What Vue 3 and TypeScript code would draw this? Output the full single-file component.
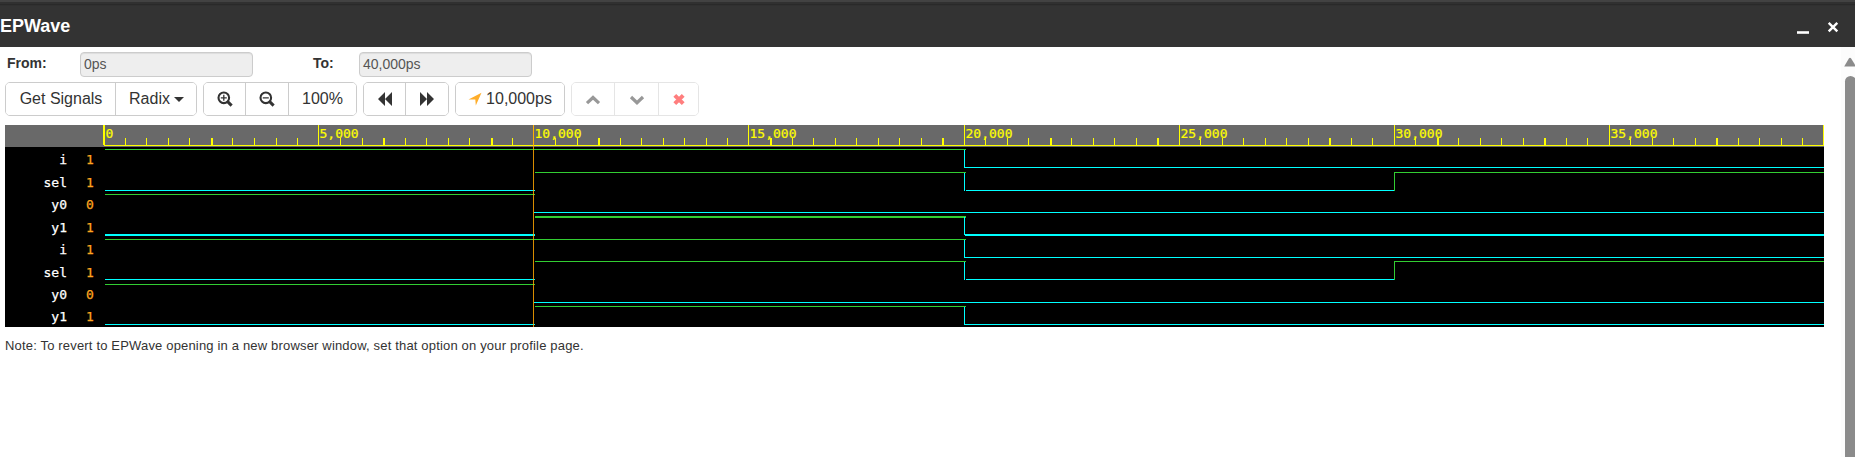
<script setup lang="ts">
const majors = [0, 5, 10, 15, 20, 25, 30, 35].map((n, i) => ({
  x: [104, 318, 533, 748, 964, 1179, 1394, 1609][i] - 5,
  label: n === 0 ? '0' : n + ',000',
}))
const wide = [5, 13, 18, 23, 31, 39, 44, 49, 57, 62, 67, 75]
const minors: { x: number; w: number }[] = []
for (let k = 1; k < 80; k++) {
  if (k % 10 === 0) continue
  minors.push({ x: Math.floor(98.98 + 21.503 * k), w: wide.includes(k) ? 2 : 1 })
}
const T1 = 529
const T2 = 959
const T3 = 1389
const END = 1819
interface Seg { x: number; w: number; y: number; h: number; hi: boolean }
const rows = [
  { name: 'i', value: '1', hi: 149, lo: 167, t: 1 },
  { name: 'sel', value: '1', hi: 172, lo: 190, t: 1 },
  { name: 'y0', value: '0', hi: 194, lo: 212, t: 1 },
  { name: 'y1', value: '1', hi: 216, lo: 234, t: 2 },
  { name: 'i', value: '1', hi: 239, lo: 257, t: 1 },
  { name: 'sel', value: '1', hi: 261, lo: 279, t: 1 },
  { name: 'y0', value: '0', hi: 284, lo: 302, t: 1 },
  { name: 'y1', value: '1', hi: 306, lo: 324, t: 1 },
]
const baselines = [39, 62, 84, 107, 129, 152, 174, 196]
const levels: Record<string, number[][]> = {
  i: [[100, T2 + 2, 1], [T2, END, 0]],
  sel: [[100, T1 + 1, 0], [T1 + 1, T2 + 2, 1], [T2 + 2, T3 + 1, 0], [T3, END, 1]],
  y0: [[100, T1 + 1, 1], [T1, END, 0]],
  y1: [[100, T1 + 1, 0], [T1 + 1, T2 + 2, 1], [T2 + 1, END, 0]],
}
const segs: Seg[] = []
for (const r of rows) {
  for (const [a, b, v] of levels[r.name]) {
    segs.push({ x: a, w: b - a, y: (v ? r.hi : r.lo) - 125, h: r.t, hi: v === 1 })
  }
  if (r.name !== 'y0') segs.push({ x: T2, w: 1, y: r.hi - 124, h: 18, hi: false })
  if (r.name === 'sel') segs.push({ x: T3, w: 1, y: r.hi - 125, h: 19, hi: true })
}
</script>

<template>
  <div class="window">
    <header class="titlebar">
      <span class="title">EPWave</span>
      <svg class="controls" width="50" height="30" viewBox="0 0 50 30">
        <path d="M4 19.5h12" stroke="#fff" stroke-width="2.6" />
        <path d="M35.7 9.8l8.6 8.6M44.3 9.8l-8.6 8.6" stroke="#fff" stroke-width="2.4" />
      </svg>
    </header>
    <div class="body">
      <main class="content">
        <div class="range">
          <label class="from">From:</label><div class="field">0ps</div>
          <label class="to">To:</label><div class="field">40,000ps</div>
        </div>
        <div class="toolbar">
          <div class="group">
            <button class="b1">Get Signals</button>
            <button class="b2">Radix<i class="caret"></i></button>
          </div>
          <div class="group">
            <button class="b3"><svg width="16" height="16" viewBox="0 0 16 16"><circle cx="6.8" cy="6.8" r="5.3" fill="none" stroke="#333" stroke-width="2.1" /><path d="M10.6 10.6l4 4" stroke="#333" stroke-width="3" /><path d="M3.8 6.8h6M6.8 3.8v6" stroke="#333" stroke-width="1.3" /></svg></button>
            <button class="b4"><svg width="16" height="16" viewBox="0 0 16 16"><circle cx="6.8" cy="6.8" r="5.3" fill="none" stroke="#333" stroke-width="2.1" /><path d="M10.6 10.6l4 4" stroke="#333" stroke-width="3" /><path d="M3.8 6.8h6" stroke="#333" stroke-width="1.3" /></svg></button>
            <button class="b5">100%</button>
          </div>
          <div class="group">
            <button class="b6"><svg width="16" height="16" viewBox="0 0 16 16"><path d="M8 1v14L1 8zM15 1v14L8 8z" fill="#333" /></svg></button>
            <button class="b7"><svg width="16" height="16" viewBox="0 0 16 16"><path d="M1 1v14l7-7zM8 1v14l7-7z" fill="#333" /></svg></button>
          </div>
          <div class="group">
            <button class="b8"><svg width="14" height="14" viewBox="0 0 14 14"><path d="M13.5 .8L0.5 7.6H7.3L7.8 13.6z" fill="#ffae2b" /></svg>10,000ps</button>
          </div>
          <div class="group faded">
            <button class="b9"><svg width="16" height="16" viewBox="0 0 16 16"><path d="M2 12.2l6-5.7 6 5.7" fill="none" stroke="#333" stroke-width="3.2" /></svg></button>
            <button class="b10"><svg width="16" height="16" viewBox="0 0 16 16"><path d="M2 6l6 5.7L14 6" fill="none" stroke="#333" stroke-width="3.2" /></svg></button>
            <button class="b11"><svg width="14" height="14" viewBox="0 0 14 14"><path d="M2.8 3.3l8.4 8.4M11.2 3.3l-8.4 8.4" stroke="#f00" stroke-width="4" /></svg></button>
          </div>
        </div>
        <svg class="wave" width="1819" height="202" viewBox="0 0 1819 202">
          <rect width="1819" height="202" fill="#000" />
          <rect width="1819" height="22" fill="#696969" />
          <g fill="#ff0">
            <rect x="99" y="20" width="1720" height="1" />
            <rect x="98" y="0" width="1" height="20" />
            <rect x="1818" y="0" width="1" height="20" />
            <rect v-for="m in minors" :key="m.x" :x="m.x" y="13" :width="m.w" height="7" />
            <g v-for="m in majors" :key="m.label">
              <rect :x="m.x" y="0" width="1" height="20" />
              <text class="tick" :x="m.x + 1.5" y="13">{{ m.label }}</text>
            </g>
          </g>
          <rect v-for="(s, n) in segs" :key="n" :x="s.x" :y="s.y" :width="s.w" :height="s.h" :fill="s.hi ? '#32cd32' : '#0ff'" />
          <rect x="528" y="0" width="1" height="202" fill="#ffa500" opacity=".85" />
          <g v-for="(r, n) in rows" :key="n">
            <text class="name" x="62" :y="baselines[n]" text-anchor="end">{{ r.name }}</text>
            <text class="value" x="81" :y="baselines[n]">{{ r.value }}</text>
          </g>
        </svg>
        <p class="note">Note: To revert to EPWave opening in a new browser window, set that option on your profile page.</p>
      </main>
      <aside class="scroll">
        <svg width="14" height="10" viewBox="0 0 14 10"><path d="M1.2 9.5L6 1.2Q7 .2 8 1.2L13 9.5z" fill="#8b8b8b" /></svg>
        <div class="thumb"></div>
      </aside>
    </div>
  </div>
</template>

<style>
body { margin: 0; overflow: hidden; background: #fff; }
</style>
<style scoped>
.window { width: 1855px; height: 457px; overflow: hidden; font-family: "Liberation Sans", Arial, sans-serif; color: #333; background: #fff; }
.titlebar { height: 47px; box-sizing: border-box; padding-right: 18px; background: linear-gradient(#424242 0 2px, #303030 2px 4px, #292929 4px 5px, #303030 5px 6px, #333 6px); display: flex; align-items: flex-start; justify-content: space-between; }
.title { color: #fff; font-weight: bold; font-size: 18px; line-height: 20px; margin-top: 16px; }
.controls { margin-top: 13px; margin-right: -6px; }
.body { display: flex; height: 410px; }
.content { width: 1841px; padding-left: 5px; box-sizing: border-box; }
.range { display: flex; height: 35px; padding-top: 5px; box-sizing: border-box; font-size: 14px; }
.range label { font-weight: bold; line-height: 23px; box-sizing: border-box; padding-left: 2px; }
.from { width: 75px; }
.to { width: 106px; }
.range .to { padding-left: 60px; }
.field { width: 173px; height: 25px; box-sizing: border-box; border: 1px solid #ccc; border-radius: 4px; background: #eee; color: #555; line-height: 23px; padding-left: 3px; box-shadow: inset 0 1px 1px rgba(0, 0, 0, .075); }
.toolbar { display: flex; gap: 6px; height: 43px; }
.group { display: flex; height: 34px; box-sizing: border-box; border: 1px solid #ccc; border-radius: 5px; overflow: hidden; }
.faded { opacity: .5; }
button { border: 0; background: #fff; padding: 0; font: 16px "Liberation Sans", Arial, sans-serif; color: #333; display: flex; align-items: center; justify-content: center; box-sizing: border-box; }
button + button { border-left: 1px solid #ccc; }
.b1 { width: 109px; padding-left: 1px; }
.b2 { width: 81px; padding-left: 1px; }
.caret { border: 5px solid transparent; border-top-color: #333; border-bottom: 0; margin-left: 4px; }
.b3 { width: 41px; }
.b4 { width: 43px; }
.b5 { width: 68px; }
.b6 { width: 41px; }
.b7 { width: 43px; }
.b8 { width: 108px; gap: 4px; }
.b9 { width: 42px; }
.b10 { width: 44px; }
.b11 { width: 40px; }
.wave { display: block; font: 13px "DejaVu Sans Mono", monospace; }
.tick { stroke: #ff0; stroke-width: .2px; }
.name { fill: #fff; stroke: #fff; stroke-width: .25px; }
.value { fill: #ffa51f; stroke: #ffa51f; stroke-width: .25px; }
.note { margin: 9px 0 0; font-size: 13px; line-height: 20px; letter-spacing: .172px; white-space: nowrap; }
.scroll { width: 14px; background: #fcfcfc; padding-top: 10px; box-sizing: border-box; display: flex; flex-direction: column; }
.scroll svg { margin-left: 2px; }
.thumb { margin: 9px -1px 0 4px; width: 11px; flex: 1; background: #8b8b8b; border-radius: 6px 6px 0 0; }
</style>
